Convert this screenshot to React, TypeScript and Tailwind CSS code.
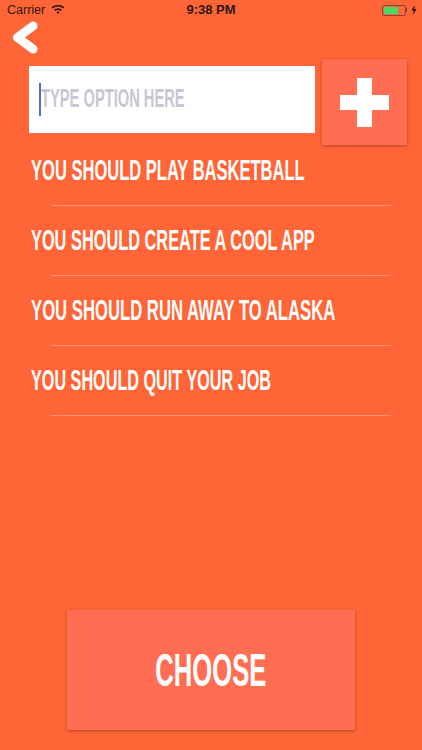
export default function App() {
  const items = [
    { t: "YOU SHOULD PLAY BASKETBALL", c: "scale-x-[0.551]" },
    { t: "YOU SHOULD CREATE A COOL APP", c: "scale-x-[0.545]" },
    { t: "YOU SHOULD RUN AWAY TO ALASKA", c: "scale-x-[0.556]" },
    { t: "YOU SHOULD QUIT YOUR JOB", c: "scale-x-[0.54]" },
  ];
  const sans = { fontFamily: '"Liberation Sans", sans-serif' };
  return (
    <div className="w-[422px] h-[750px] bg-[#ff6536] flex flex-col overflow-hidden" style={sans}>
      <div className="h-[20px] flex items-center justify-between pl-[7px] pr-[5px] text-[12.5px] text-[#2a1a14] relative shrink-0">
        <div className="flex items-center gap-[6px]">
          <span>Carrier</span>
          <svg width="14" height="10" viewBox="0 0 14 10" className="-mt-[2px]">
            <path d="M0.5 3.2 A9.5 9.5 0 0 1 13.5 3.2 L12.2 4.6 A7.6 7.6 0 0 0 1.8 4.6 Z M3 5.8 A6 6 0 0 1 11 5.8 L9.7 7.1 A4.2 4.2 0 0 0 4.3 7.1 Z M5.4 8.2 A2.6 2.6 0 0 1 8.6 8.2 L7 10 Z" fill="#2a1a14" />
          </svg>
        </div>
        <span className="absolute left-0 right-0 text-center font-bold text-[13px] pointer-events-none">9:38 PM</span>
        <div className="flex items-center gap-[4px]">
          <div className="flex items-center">
            <div className="w-[24px] h-[11px] border border-[#7a4a38] rounded-[2px] p-[1px] flex">
              <div className="w-[14px] bg-[#4cd964]" />
            </div>
            <div className="w-[1.5px] h-[4px] bg-[#7a4a38]" />
          </div>
          <svg width="6" height="10" viewBox="0 0 6 10"><path d="M3.8 0 L0.4 5.6 H2.6 L2 10 L5.6 4 H3.3 Z" fill="#2a1a14" /></svg>
        </div>
      </div>

      <div className="h-[39px] shrink-0 pl-[12px]">
        <svg width="26" height="33" viewBox="0 0 26 33" className="mt-[1px]">
          <path d="M21 5 L5.5 16.5 L21 28" fill="none" stroke="#fff" strokeWidth="9" strokeLinecap="round" strokeLinejoin="round" />
        </svg>
      </div>

      <div className="flex items-start pl-[29px] gap-[7px] h-[86px] shrink-0">
        <div className="w-[286px] h-[67px] bg-white flex items-center pl-[10px] mt-[7px]">
          <div className="w-[2px] h-[33px] bg-[#4f6fd0] shrink-0" />
          <div className="text-[26px] font-bold text-[#c7c8d3] origin-left scale-x-[0.565] whitespace-nowrap -mt-[2px]">TYPE OPTION HERE</div>
        </div>
        <div className="w-[85px] h-[86px] bg-[#ff6e53] shadow-[0_1px_3px_rgba(0,0,0,0.3)] flex items-center justify-center">
          <svg width="49" height="49" viewBox="0 0 49 49"><path d="M17 0 H32 V17 H49 V32 H32 V49 H17 V32 H0 V17 H17 Z" fill="#fff" /></svg>
        </div>
      </div>

      <div className="flex flex-col shrink-0 -mt-[9px]">
        {items.map(({ t, c }) => (
          <div key={t} className="h-[70px] flex flex-col">
            <div className="flex-1 flex items-center pl-[31px] pb-[3px]">
              <span className={`text-[30px] font-bold text-white origin-left whitespace-nowrap ${c}`}>{t}</span>
            </div>
            <div className="ml-[51px] w-[340px] h-px bg-[#ff9270] shrink-0" />
          </div>
        ))}
      </div>

      <div className="flex-1 flex items-end pl-[67px] pb-[20px]">
        <div className="w-[288px] h-[120px] bg-[#ff6e53] shadow-[0_1px_3px_rgba(0,0,0,0.3)] flex items-center justify-center">
          <span className="text-[47px] font-bold text-white scale-x-[0.545] whitespace-nowrap">CHOOSE</span>
        </div>
      </div>
    </div>
  );
}
